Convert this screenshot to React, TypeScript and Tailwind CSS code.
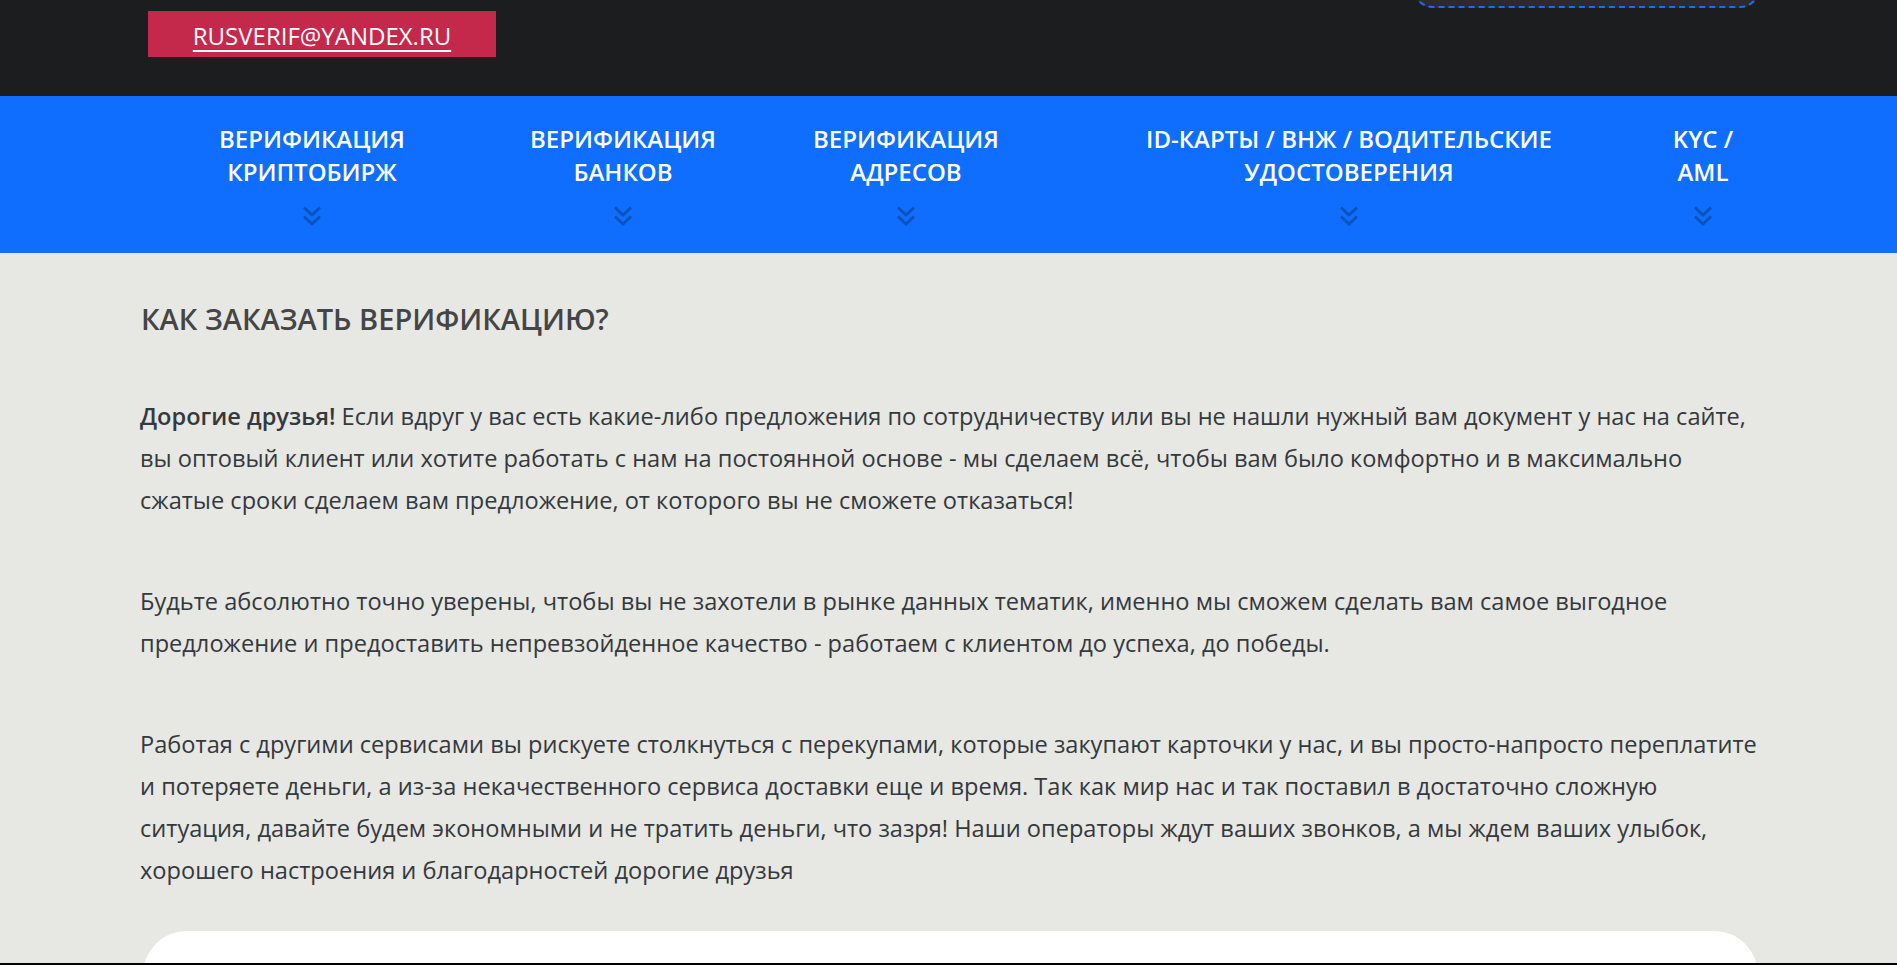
import React from "react";

const navItems = [
  ["ВЕРИФИКАЦИЯ", "КРИПТОБИРЖ"],
  ["ВЕРИФИКАЦИЯ", "БАНКОВ"],
  ["ВЕРИФИКАЦИЯ", "АДРЕСОВ"],
  ["ID-КАРТЫ / ВНЖ / ВОДИТЕЛЬСКИЕ", "УДОСТОВЕРЕНИЯ"],
  ["KYC /", "AML"],
];

function Chevrons() {
  return (
    <svg width="20" height="22" viewBox="0 0 20 22" fill="none" stroke="#0a52bd" strokeWidth="2.8" strokeLinecap="butt" strokeLinejoin="miter">
      <path d="M2 2.5 L10 10 L18 2.5" />
      <path d="M2 11.5 L10 19 L18 11.5" />
    </svg>
  );
}

export default function App() {
  return (
    <div className="h-[965px] flex flex-col overflow-hidden bg-[#e7e7e3]" style={{ fontFamily: '"Open Sans", "Noto Sans", sans-serif' }}>
      <header className="h-[96px] shrink-0 bg-[#1c1d1f] overflow-hidden">
        <div className="mx-[140px] flex justify-between items-start">
          <a href="#" className="mt-[11px] ml-[8px] w-[348px] h-[46px] bg-[#c4294c] flex items-center justify-center text-white text-[24px] leading-none pt-[3px] underline underline-offset-[5px] decoration-2">
            RUSVERIF@YANDEX.RU
          </a>
          <div className="-mt-[32px] mr-[-3px] w-[347px] h-[40px] rounded-[22px] border-2 border-dashed border-[#1a6ef0] bg-[#2b2b2b]" />
        </div>
      </header>
      <nav className="h-[157px] shrink-0 bg-[#0f6efd]">
        <div className="mx-[140px] grid grid-cols-[344px_278px_288px_598px_110px] pt-[26px]">
          {navItems.map((lines, i) => (
            <div key={i} className="flex flex-col items-center text-white font-semibold text-[24px] leading-[33px] text-center">
              <span>{lines[0]}</span>
              <span>{lines[1]}</span>
              <div className="mt-[17px]">
                <Chevrons />
              </div>
            </div>
          ))}
        </div>
      </nav>
      <main className="flex-1 overflow-hidden">
        <div className="mx-[140px] pt-[47px]">
          <h2 className="text-[29px] leading-[38px] font-semibold text-[#454545] ml-[1px]">КАК ЗАКАЗАТЬ ВЕРИФИКАЦИЮ?</h2>
          <div className="mt-[57px] text-[23.6px] leading-[42px] text-[#34393d] w-[1622px]">
            <p>
              <b className="font-semibold">Дорогие друзья!</b> Если вдруг у вас есть какие-либо предложения по сотрудничеству или вы не нашли нужный вам документ у нас на сайте, вы оптовый клиент или хотите работать с нам на постоянной основе - мы сделаем всё, чтобы вам было комфортно и в максимально сжатые сроки сделаем вам предложение, от которого вы не сможете отказаться!
            </p>
            <p className="mt-[59px]">
              Будьте абсолютно точно уверены, чтобы вы не захотели в рынке данных тематик, именно мы сможем сделать вам самое выгодное предложение и предоставить непревзойденное качество - работаем с клиентом до успеха, до победы.
            </p>
            <p className="mt-[59px]">
              Работая с другими сервисами вы рискуете столкнуться с перекупами, которые закупают карточки у нас, и вы просто-напросто переплатите и потеряете деньги, а из-за некачественного сервиса доставки еще и время. Так как мир нас и так поставил в достаточно сложную ситуация, давайте будем экономными и не тратить деньги, что зазря! Наши операторы ждут ваших звонков, а мы ждем ваших улыбок, хорошего настроения и благодарностей дорогие друзья
            </p>
          </div>
          <div className="mt-[40px] ml-[3px] w-[1615px] h-[200px] bg-white rounded-[44px]" />
        </div>
      </main>
      <div className="h-[2px] shrink-0 bg-black" />
    </div>
  );
}
